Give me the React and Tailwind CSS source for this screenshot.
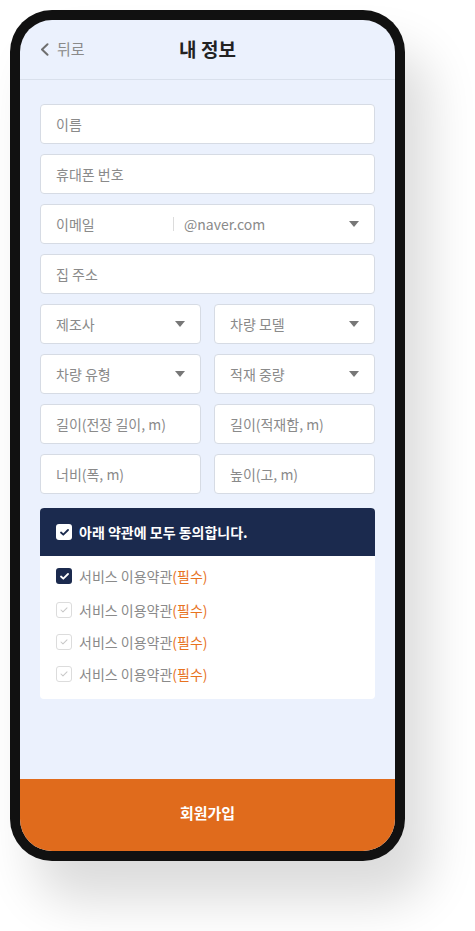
import React from "react";

const font = { fontFamily: '"Noto Sans CJK KR", "Noto Sans", sans-serif' };

const Caret = () => (
  <svg width="10" height="6" viewBox="0 0 10 6" className="shrink-0">
    <path d="M0 0h10L5 6z" fill="#777" />
  </svg>
);

const Field = ({ label, select }) => (
  <div className="flex h-10 items-center justify-between rounded-[4px] border border-[#d6dbe4] bg-white pl-[15px] pr-[15px]">
    <span className="text-[14px] text-[#8a8a8a]">{label}</span>
    {select && <Caret />}
  </div>
);

const Check = ({ on, light }) => {
  if (on) {
    return (
      <span
        className={`flex h-4 w-4 shrink-0 items-center justify-center rounded-[3px] ${
          light ? "bg-white" : "bg-[#1b2a4e]"
        }`}
      >
        <svg width="9" height="7" viewBox="0 0 9 7">
          <path
            d="M1 3.5l2.3 2.2L8 1"
            fill="none"
            stroke={light ? "#1b2a4e" : "#fff"}
            strokeWidth="1.8"
            strokeLinecap="round"
            strokeLinejoin="round"
          />
        </svg>
      </span>
    );
  }
  return (
    <span className="flex h-4 w-4 shrink-0 items-center justify-center rounded-[3px] border border-[#dcdcdc] bg-white">
      <svg width="8" height="6" viewBox="0 0 9 7">
        <path
          d="M1 3.5l2.3 2.2L8 1"
          fill="none"
          stroke="#c8c8c8"
          strokeWidth="1.2"
          strokeLinecap="round"
          strokeLinejoin="round"
        />
      </svg>
    </span>
  );
};

const Term = ({ on }) => (
  <div className="flex h-4 items-center gap-[7px]">
    <Check on={on} />
    <span className="text-[14px] text-[#8a8a8a]">
      서비스 이용약관<span className="text-[#e8731f]">(필수)</span>
    </span>
  </div>
);

export default function App() {
  return (
    <div className="h-[931px] w-[475px] bg-white p-[10px]" style={font}>
      <div className="h-[851px] w-[395px] rounded-[42px] bg-[#111] p-[10px] shadow-[24px_40px_50px_rgba(0,0,0,0.14)]">
        <div className="flex h-full flex-col overflow-hidden rounded-[32px] bg-[#ebf1fd]">
          <div className="relative flex h-[60px] shrink-0 items-center border-b border-[#d9e0ec] px-5">
            <div className="flex items-center gap-[8px] text-[15px] text-[#8a8a8a]">
              <svg width="9" height="13" viewBox="0 0 9 13">
                <path
                  d="M7.5 1.2L2 6.5l5.5 5.3"
                  fill="none"
                  stroke="#6f6f6f"
                  strokeWidth="2"
                  strokeLinecap="round"
                  strokeLinejoin="round"
                />
              </svg>
              <span>뒤로</span>
            </div>
            <div className="absolute inset-x-0 text-center text-[19px] font-bold text-[#222] pointer-events-none">
              내 정보
            </div>
          </div>

          <div className="flex flex-1 flex-col gap-[10px] px-5 pt-6">
            <Field label="이름" />
            <Field label="휴대폰 번호" />
            <div className="flex h-10 items-center rounded-[4px] border border-[#d6dbe4] bg-white pl-[15px] pr-[15px]">
              <span className="w-[117px] text-[14px] text-[#8a8a8a]">이메일</span>
              <span className="h-[14px] w-px bg-[#dcdcdc]" />
              <span className="ml-[10px] flex-1 text-[14px] text-[#8a8a8a]">@naver.com</span>
              <Caret />
            </div>
            <Field label="집 주소" />
            <div className="grid grid-cols-2 gap-x-[13px] gap-y-[10px]">
              <Field label="제조사" select />
              <Field label="차량 모델" select />
              <Field label="차량 유형" select />
              <Field label="적재 중량" select />
              <Field label="길이(전장 길이, m)" />
              <Field label="길이(적재함, m)" />
              <Field label="너비(폭, m)" />
              <Field label="높이(고, m)" />
            </div>

            <div className="mt-[4px] overflow-hidden rounded-[4px] bg-white">
              <div className="flex h-12 items-center gap-[7px] bg-[#1b2a4e] px-4">
                <Check on light />
                <span className="text-[14px] font-bold text-white">아래 약관에 모두 동의합니다.</span>
              </div>
              <div className="flex flex-col px-4 pb-[17px] pt-[12px]">
                <Term on />
                <div className="mt-[18px] flex flex-col gap-4">
                  <Term />
                  <Term />
                  <Term />
                </div>
              </div>
            </div>
          </div>

          <div className="flex h-[72px] shrink-0 items-center justify-center bg-[#e06b1c] pb-[4px] text-[15px] font-bold text-white">
            회원가입
          </div>
        </div>
      </div>
    </div>
  );
}
